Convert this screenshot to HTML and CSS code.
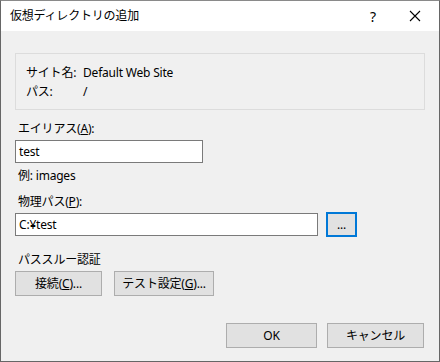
FILE: index.html
```html
<!DOCTYPE html>
<html lang="ja">
<head>
    <meta charset="UTF-8">
    <title>仮想ディレクトリの追加</title>
    <link rel="stylesheet" href="styles.css">
</head>
<body>
    <div class="window">
        <div class="titlebar">
            <span class="title">仮想ディレクトリの追加</span>
            <span class="help">?</span>
            <span class="close">
                <svg width="12" height="12" viewBox="0 0 12 12">
                    <path d="M1 1 L11 11 M11 1 L1 11" stroke="#000" stroke-width="1.1" fill="none"/>
                </svg>
            </span>
        </div>
        <div class="content">
            <div class="info-box">
                <span>サイト名:</span><span>Default Web Site</span>
                <span>パス:</span><span>/</span>
            </div>

            <label class="label label-alias">エイリアス(<u>A</u>):</label>
            <div class="textbox textbox-alias">test</div>
            <p class="hint">例: images</p>

            <label class="label label-path">物理パス(<u>P</u>):</label>
            <div class="path-row">
                <div class="textbox textbox-path">C:¥test</div>
                <button class="btn btn-browse">...</button>
            </div>

            <p class="label label-auth">パススルー認証</p>
            <div class="auth-row">
                <button class="btn btn-connect">接続(<u>C</u>)...</button>
                <button class="btn btn-test">テスト設定(<u>G</u>)...</button>
            </div>

            <div class="footer">
                <button class="btn btn-ok">OK</button>
                <button class="btn btn-cancel">キャンセル</button>
            </div>
        </div>
    </div>
</body>
</html>
```

FILE: styles.css
```css
* {
    margin: 0;
    padding: 0;
    box-sizing: border-box;
}

body {
    width: 440px;
    height: 362px;
    overflow: hidden;
    font-family: "Noto Sans", "Noto Sans CJK JP", sans-serif;
    font-size: 12px;
    letter-spacing: -0.2px;
    color: #000;
}

.window {
    width: 440px;
    height: 362px;
    border: 1px solid #666;
    border-top-color: #8a8a8a;
    display: flex;
    flex-direction: column;
}

/* title bar */
.titlebar {
    height: 30px;
    background: #fff;
    display: flex;
    align-items: center;
    padding-left: 9px;
}

.title {
    flex: 1;
    line-height: 16px;
}

.help {
    width: 14px;
    margin-right: 29px;
    font-size: 14px;
    text-align: center;
}

.close {
    width: 12px;
    height: 12px;
    margin-right: 18px;
    display: flex;
}

/* dialog body */
.content {
    flex: 1;
    background: #f0f0f0;
    padding: 22px 14px 0 14px;
    display: flex;
    flex-direction: column;
}

.info-box {
    width: 410px;
    height: 57px;
    border: 1px solid #dcdcdc;
    padding: 9px 0 0 10px;
    display: grid;
    grid-template-columns: 57px 1fr;
    grid-auto-rows: 19px;
    align-items: center;
    line-height: 16px;
}

.label {
    display: block;
    line-height: 16px;
    margin-left: 3px;
}

.label u,
.btn u {
    text-underline-offset: 1px;
}

.label-alias {
    margin-top: 11px;
}

.label-path {
    margin-top: 10px;
}

.label-auth {
    margin-top: 15px;
}

.textbox {
    height: 23px;
    background: #fff;
    border: 1px solid #7a7a7a;
    padding-left: 3px;
    line-height: 21px;
}

.textbox-alias {
    width: 188px;
    margin-top: 3px;
}

.hint {
    margin: 5px 0 0 3px;
    line-height: 16px;
}

.path-row {
    margin-top: 2px;
    display: flex;
    align-items: center;
    gap: 8px;
}

.textbox-path {
    width: 303px;
}

.btn {
    height: 25px;
    background: #e1e1e1;
    border: 1px solid #adadad;
    font-family: inherit;
    font-size: 12px;
    letter-spacing: inherit;
    color: #000;
    line-height: 16px;
}

.btn-browse {
    width: 31px;
    border: 2px solid #0078d7;
    line-height: 14px;
}

.auth-row {
    margin-top: 3px;
    display: flex;
    gap: 12px;
}

.btn-connect {
    width: 87px;
}

.btn-test {
    width: 100px;
}

.footer {
    margin-top: 27px;
    display: flex;
    justify-content: flex-end;
    gap: 10px;
    padding-right: 1px;
}

.btn-ok {
    width: 91px;
}

.btn-cancel {
    width: 97px;
}
```
